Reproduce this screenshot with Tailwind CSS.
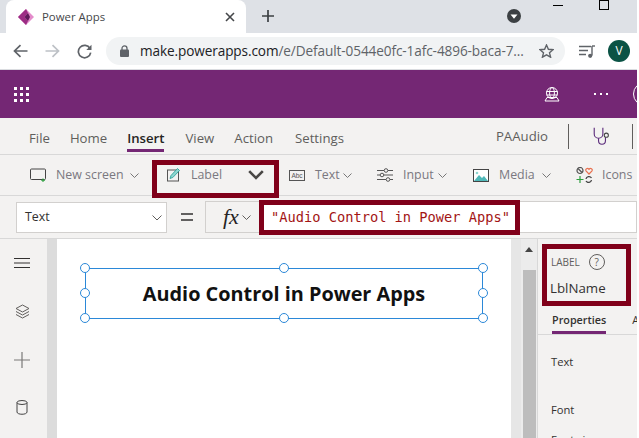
<!DOCTYPE html>
<html lang="en">
<head>
    <meta charset="UTF-8">
    <title>Power Apps</title>
    <script src="https://cdn.jsdelivr.net/npm/@tailwindcss/browser@4"></script>
</head>
<body class="bg-white overflow-hidden font-['Open_Sans',sans-serif]">
<div class="relative w-[639px] h-[438px] overflow-hidden [&_svg]:shrink-0">
  <div class="w-[637px]">

    <!-- browser tabs -->
    <div class="flex h-[33px] bg-[#dee1e6]">
      <div class="ml-[6px] w-[240px] h-[33px] bg-white rounded-t-lg flex items-center pl-[12px]">
        <svg width="16" height="16" viewBox="0 0 16 16"><path d="M8 0 L16 8 L8 16 L0 8Z" fill="#e48ccb"/><path d="M4 4 L8 0 L10 4 L6.5 8 L10 12 L8 16 L0 8Z" fill="#9c2d84"/><path d="M6.5 8 L10 4 L12 8 L10 12Z" fill="#5e1a5a"/></svg>
        <span class="ml-[8px] text-[11.4px] text-[#45474a]">Power Apps</span>
        <svg class="ml-auto mr-[11px]" width="10" height="10" viewBox="0 0 10 10"><path d="M1 1 L9 9 M9 1 L1 9" stroke="#45474a" stroke-width="1.6"/></svg>
      </div>
      <svg class="ml-[16px] mt-[10px]" width="12" height="12" viewBox="0 0 12 12"><path d="M6 0 V12 M0 6 H12" stroke="#3c4043" stroke-width="1.7"/></svg>
      <svg class="ml-[233px] mt-[9px]" width="14" height="14" viewBox="0 0 14 14"><circle cx="7" cy="7" r="7" fill="#3c4043"/><path d="M3.5 5.5 H10.5 L7 9.8Z" fill="#fff"/></svg>
    </div>

    <!-- address bar -->
    <div class="flex items-center h-[37px] bg-white border-b border-[#dadce0]">
      <svg class="ml-[13px]" width="15" height="14" viewBox="0 0 15 14"><path d="M14.5 7 H2 M7.5 1.2 L1.5 7 L7.5 12.8" fill="none" stroke="#5f6368" stroke-width="1.7"/></svg>
      <svg class="ml-[17px]" width="15" height="14" viewBox="0 0 15 14"><path d="M0.5 7 H13 M7.5 1.2 L13.5 7 L7.5 12.8" fill="none" stroke="#bdc1c6" stroke-width="1.7"/></svg>
      <svg class="ml-[17px]" width="15" height="15" viewBox="0 0 15 15"><path d="M13 4.5 A6.2 6.2 0 1 0 13.7 8.6" fill="none" stroke="#5f6368" stroke-width="1.7"/><path d="M14.5 0.8 V6 H9.3Z" fill="#5f6368"/></svg>
      <div class="ml-[14px] w-[459px] h-[28px] bg-[#f1f3f4] rounded-full flex items-center pl-[14px] shrink-0">
        <svg width="9" height="12" viewBox="0 0 9 12"><path d="M2 5 V3.4 A2.5 2.5 0 0 1 7 3.4 V5" fill="none" stroke="#5f6368" stroke-width="1.3"/><rect x="0" y="4.6" width="9" height="7.4" rx="1" fill="#5f6368"/></svg>
        <span class="ml-[11px] text-[13.6px] text-[#202124] whitespace-nowrap tracking-[-0.1px]">make.powerapps.com<span class="text-[#5f6368]">/e/Default-0544e0fc-1afc-4896-baca-7...</span></span>
        <svg class="ml-auto mr-[11px]" width="15" height="14" viewBox="0 0 15 14"><path d="M7.5 1 L9.4 5.3 L14 5.7 L10.5 8.8 L11.6 13.2 L7.5 10.9 L3.4 13.2 L4.5 8.8 L1 5.7 L5.6 5.3Z" fill="none" stroke="#5f6368" stroke-width="1.4"/></svg>
      </div>
      <svg class="ml-[14px]" width="16" height="13" viewBox="0 0 16 13"><path d="M0 1.5 H12 M0 5.5 H9 M0 9.5 H7" stroke="#5f6368" stroke-width="1.3"/><path d="M13 1 V10.5" stroke="#5f6368" stroke-width="1.4"/><path d="M13 1 H16" stroke="#5f6368" stroke-width="1.4"/><circle cx="11.2" cy="10.8" r="2.1" fill="#5f6368"/></svg>
      <div class="ml-[13px] w-[22px] h-[22px] rounded-full bg-[#0b5345] flex items-center justify-center text-white text-[12px] shrink-0">V</div>
    </div>

    <!-- purple app bar -->
    <div class="flex items-center h-[48px] bg-[#742774] overflow-hidden">
      <div class="ml-[14px] w-[15px] shrink-0 grid grid-cols-3 gap-[3px]">
        <i class="h-[3px] bg-white"></i><i class="h-[3px] bg-white"></i><i class="h-[3px] bg-white"></i>
        <i class="h-[3px] bg-white"></i><i class="h-[3px] bg-white"></i><i class="h-[3px] bg-white"></i>
        <i class="h-[3px] bg-white"></i><i class="h-[3px] bg-white"></i><i class="h-[3px] bg-white"></i>
      </div>
      <svg class="ml-[515px]" width="16" height="15" viewBox="0 0 16 15"><circle cx="8" cy="6" r="5.5" fill="none" stroke="#fff"/><ellipse cx="8" cy="6" rx="2.4" ry="5.5" fill="none" stroke="#fff"/><path d="M2.5 4.5 H13.5 M2.5 8 H13.5" stroke="#fff"/><path d="M1 14 L3 10.5 H13 L15 14Z" fill="none" stroke="#fff"/></svg>
      <div class="ml-[34px] flex gap-[4px] shrink-0"><i class="w-[2px] h-[2px] bg-white"></i><i class="w-[2px] h-[2px] bg-white"></i><i class="w-[2px] h-[2px] bg-white"></i></div>
      <div class="ml-[25px] w-[24px] h-[24px] shrink-0 rounded-full border border-white"></div>
    </div>

    <!-- menu tabs -->
    <div class="flex items-center h-[37px] bg-[#f3f2f1] border-b border-[#d8d8d8] text-[13.2px] text-[#605e5c]">
      <span class="mt-[5px] ml-[29px]">File</span>
      <span class="mt-[5px] ml-[20px]">Home</span>
      <span class="mt-[5px] ml-[20px] relative font-semibold text-[#252423]">Insert<i class="absolute left-0 right-0 top-[20px] h-[3px] bg-[#742774]"></i></span>
      <span class="mt-[5px] ml-[21px]">View</span>
      <span class="mt-[5px] ml-[20px]">Action</span>
      <span class="mt-[5px] ml-[22px]">Settings</span>
      <span class="mt-[1px] ml-[152px]">PAAudio</span>
      <i class="ml-[20px] w-px h-[25px] bg-[#605e5c]"></i>
      <svg class="ml-[24px]" width="18" height="19" viewBox="0 0 20 22"><path d="M1 1 V8 A5 5 0 0 0 11 8 V1 M6 13 V16 A4 4 0 0 0 14 16 V12" fill="none" stroke="#5c2d7c" stroke-width="1.3"/><circle cx="15" cy="9.5" r="2.4" fill="none" stroke="#444" stroke-width="1.2"/></svg>
      <i class="ml-[21px] w-px h-[25px] bg-[#605e5c]"></i>
    </div>

    <!-- ribbon -->
    <div class="flex items-center h-[41px] bg-[#f3f2f1] border-b border-[#d8d8d8] text-[12.4px] text-[#7a7880] whitespace-nowrap">
      <svg class="ml-[30px]" width="17" height="14" viewBox="0 0 17 14"><rect x="0.5" y="1" width="15" height="10.5" rx="1" fill="none" stroke="#444"/><path d="M13 10.5 V14 M11.2 12.3 H15" stroke="#2e9e3e" stroke-width="1.1"/></svg>
      <span class="ml-[9px] w-[68px]">New screen</span>
      <svg class="ml-[6px]" width="9" height="5" viewBox="0 0 9 5"><path d="M0.5 0.5 L4.5 4.5 L8.5 0.5" fill="none" stroke="#777"/></svg>
      <svg class="ml-[28px]" width="13" height="14" viewBox="0 0 13 14"><rect x="0.5" y="2" width="11" height="11" fill="none" stroke="#555"/><path d="M3 10.5 L4 7.5 L10.5 0.5 L12.5 2.5 L5.8 9.5Z" fill="#8fd6d0" stroke="#1f9d94" stroke-width="0.8"/></svg>
      <span class="ml-[11px] w-[31px]">Label</span>
      <svg class="ml-[26px]" width="16" height="10" viewBox="0 0 16 10"><path d="M1.2 1.2 L8 8 L14.8 1.2" fill="none" stroke="#484644" stroke-width="2.6"/></svg>
      <svg class="ml-[25px]" width="16" height="11" viewBox="0 0 16 11"><rect x="0.5" y="0.5" width="15" height="10" fill="none" stroke="#555"/><text x="8" y="8" text-anchor="middle" font-size="6.5" fill="#555" font-family="Liberation Sans">Abc</text></svg>
      <span class="ml-[10px] w-[23px]">Text</span>
      <svg class="ml-[5px]" width="9" height="5" viewBox="0 0 9 5"><path d="M0.5 0.5 L4.5 4.5 L8.5 0.5" fill="none" stroke="#777"/></svg>
      <svg class="ml-[25px]" width="16" height="14" viewBox="0 0 16 14"><path d="M0 2.5 H7 M11 2.5 H16 M0 7 H3 M7 7 H16 M0 11.5 H9 M13 11.5 H16" stroke="#555"/><circle cx="9" cy="2.5" r="1.8" fill="none" stroke="#555"/><circle cx="5" cy="7" r="1.8" fill="none" stroke="#555"/><circle cx="11" cy="11.5" r="1.8" fill="none" stroke="#555"/></svg>
      <span class="ml-[10px] w-[30px]">Input</span>
      <svg class="ml-[5px]" width="9" height="5" viewBox="0 0 9 5"><path d="M0.5 0.5 L4.5 4.5 L8.5 0.5" fill="none" stroke="#777"/></svg>
      <svg class="ml-[26px]" width="16" height="13" viewBox="0 0 16 13"><rect x="0.5" y="0.5" width="15" height="12" fill="#fff" stroke="#444"/><path d="M1 12 L6 6 L9 9 L11 7 L15 12Z" fill="#4fb8b8"/><circle cx="4" cy="4" r="1.3" fill="#8fd6d0"/></svg>
      <span class="ml-[10px] w-[37px]">Media</span>
      <svg class="ml-[6px]" width="9" height="5" viewBox="0 0 9 5"><path d="M0.5 0.5 L4.5 4.5 L8.5 0.5" fill="none" stroke="#777"/></svg>
      <svg class="ml-[25px]" width="17" height="16" viewBox="0 0 17 16"><circle cx="4" cy="3.5" r="3" fill="none" stroke="#555" stroke-width="1.2"/><path d="M2 1.5 L6 5.5" stroke="#555" stroke-width="1.2"/><path d="M13 7 L10 3.8 C9 2 11.5 0.5 13 2.3 C14.5 0.5 17 2 16 3.8Z" fill="none" stroke="#e8704f" stroke-width="1.2"/><path d="M4 9 V16 M0.5 12.5 H7.5" stroke="#2e9e3e" stroke-width="1.2"/><path d="M10 12 A3 3 0 0 1 15.5 11 M15.5 13 A3 3 0 0 1 10 14" fill="none" stroke="#444" stroke-width="1.3"/></svg>
      <span class="ml-[9px]">Icons</span>
    </div>

    <!-- formula bar -->
    <div class="flex items-center h-[43px] bg-[#f3f2f1] border-b border-[#d8d8d8]">
      <div class="ml-[16px] mt-[1px] w-[151px] h-[31px] bg-white border border-[#d2d0ce] flex items-center pl-[8px] text-[12.4px] text-[#323130]">
        Text
        <svg class="ml-auto mr-[4px]" width="10" height="6" viewBox="0 0 10 6"><path d="M0.5 0.5 L5 5 L9.5 0.5" fill="none" stroke="#605e5c"/></svg>
      </div>
      <svg class="ml-[14px]" width="12" height="8" viewBox="0 0 12 8"><path d="M0 1 H12 M0 7 H12" stroke="#323130" stroke-width="1.6"/></svg>
      <div class="ml-[12px] w-[56px] h-[32px] border border-[#d2d0ce] flex items-center pl-[17px] shrink-0">
        <span class="font-['Liberation_Serif',serif] italic text-[22px] text-[#252423] leading-none">fx</span>
        <svg class="ml-[3px]" width="9" height="5" viewBox="0 0 9 5"><path d="M0.5 0.5 L4.5 4.5 L8.5 0.5" fill="none" stroke="#605e5c"/></svg>
      </div>
      <div class="flex-1 h-[32px] bg-white border border-[#d2d0ce] flex items-center pl-[9px] font-['DejaVu_Sans_Mono',monospace] text-[13.7px] text-[#a31515] whitespace-pre">"Audio Control in Power Apps"</div>
    </div>

    <!-- studio body -->
    <div class="flex h-[200px]">
      <div class="w-[47px] bg-[#f3f2f1] flex flex-col items-center pt-[19px] pr-[3px]">
        <svg width="16" height="10" viewBox="0 0 16 10"><path d="M0 0.5 H16 M0 5 H16 M0 9.5 H16" stroke="#323130"/></svg>
        <svg class="mt-[36px]" width="15" height="15" viewBox="0 0 15 15"><path d="M7.5 1 L14 4.5 L7.5 8 L1 4.5Z M1 7.5 L7.5 11 L14 7.5 M1 10.5 L7.5 14 L14 10.5" fill="none" stroke="#605e5c"/></svg>
        <svg class="mt-[33px]" width="16" height="16" viewBox="0 0 16 16"><path d="M8 0 V16 M0 8 H16" stroke="#7a7978" stroke-width="1.2"/></svg>
        <svg class="mt-[32px]" width="12" height="15" viewBox="0 0 12 15"><ellipse cx="6" cy="2.5" rx="5" ry="2" fill="none" stroke="#444"/><path d="M1 2.5 V12 C1 15 11 15 11 12 V2.5" fill="none" stroke="#444"/></svg>
      </div>
      <div class="w-[10px] bg-[#dcdcdc]"></div>

      <div class="relative w-[454px] bg-white">
        <!-- selected label on the canvas -->
        <div class="absolute left-[28px] top-[29px] w-[398px] h-[51px] border border-[#2b88d8] flex items-center justify-center text-[19.85px] font-bold text-[#111]">Audio Control in Power Apps</div>
        <i class="absolute left-[23px] top-[24px] w-[10px] h-[10px] rounded-full bg-white border-[1.5px] border-[#2b88d8]"></i>
        <i class="absolute left-[222px] top-[24px] w-[10px] h-[10px] rounded-full bg-white border-[1.5px] border-[#2b88d8]"></i>
        <i class="absolute left-[421px] top-[24px] w-[10px] h-[10px] rounded-full bg-white border-[1.5px] border-[#2b88d8]"></i>
        <i class="absolute left-[23px] top-[49px] w-[10px] h-[10px] rounded-full bg-white border-[1.5px] border-[#2b88d8]"></i>
        <i class="absolute left-[421px] top-[49px] w-[10px] h-[10px] rounded-full bg-white border-[1.5px] border-[#2b88d8]"></i>
        <i class="absolute left-[23px] top-[74px] w-[10px] h-[10px] rounded-full bg-white border-[1.5px] border-[#2b88d8]"></i>
        <i class="absolute left-[222px] top-[74px] w-[10px] h-[10px] rounded-full bg-white border-[1.5px] border-[#2b88d8]"></i>
        <i class="absolute left-[421px] top-[74px] w-[10px] h-[10px] rounded-full bg-white border-[1.5px] border-[#2b88d8]"></i>
      </div>
      <div class="w-[10px] bg-[#e6e6e6]"></div>
      <div class="w-[16px] bg-[#ececec] flex flex-col items-center">
        <svg class="mt-[8px]" width="8" height="5" viewBox="0 0 8 5"><path d="M0 5 L4 0 L8 5Z" fill="#444"/></svg>
        <div class="mt-[18px] w-[13px] flex-1 bg-[#bdbdbd]"></div>
      </div>

      <!-- properties pane -->
      <div class="flex-1 bg-[#f3f2f1] border-l border-[#d8d8d8] min-w-0 overflow-hidden">
        <div class="flex items-center pl-[13px] pt-[16px] h-[30px]">
          <span class="text-[10px] text-[#605e5c]">LABEL</span>
          <span class="ml-[9px] w-[16px] h-[16px] rounded-full border border-[#605e5c] flex items-center justify-center text-[10px] text-[#605e5c]">?</span>
        </div>
        <div class="pl-[12px] mt-[10px] text-[13.3px] text-[#323130] leading-[18px]">LblName</div>
        <div class="flex h-[28px] mt-[10px] border-b border-[#d8d8d8] text-[10.8px] font-semibold text-[#323130] relative whitespace-nowrap">
          <span class="ml-[14px] relative h-[27px] pt-[5px]">Properties<i class="absolute left-0 right-0 bottom-0 h-[3px] bg-[#742774]"></i></span>
          <span class="ml-[26px] pt-[5px] font-normal">A</span>
        </div>
        <div class="pl-[13px] pt-[19px] text-[11.2px] text-[#323130]">Text</div>
        <div class="pl-[13px] pt-[31px] text-[11.2px] text-[#323130]">Font</div>
        <div class="pl-[13px] pt-[13px] text-[11.2px] text-[#323130]">Font size</div>
      </div>
    </div>
  </div>

  <!-- red callouts over the screenshot -->
  <div class="absolute left-[152px] top-[160px] w-[127px] h-[38px] border-[5px] border-[#80001a]"></div>
  <div class="absolute left-[259px] top-[200px] w-[261px] h-[35px] border-[5px] border-[#80001a]"></div>
  <div class="absolute left-[542px] top-[244px] w-[89px] h-[62px] border-[5px] border-[#80001a]"></div>

  <!-- window buttons peeking at the top -->
  <i class="absolute left-[553px] top-[5px] w-[10px] h-px bg-black"></i>
  <i class="absolute left-[599px] top-0 w-[10px] h-[10px] border border-black"></i>
</div>
</body>
</html>
